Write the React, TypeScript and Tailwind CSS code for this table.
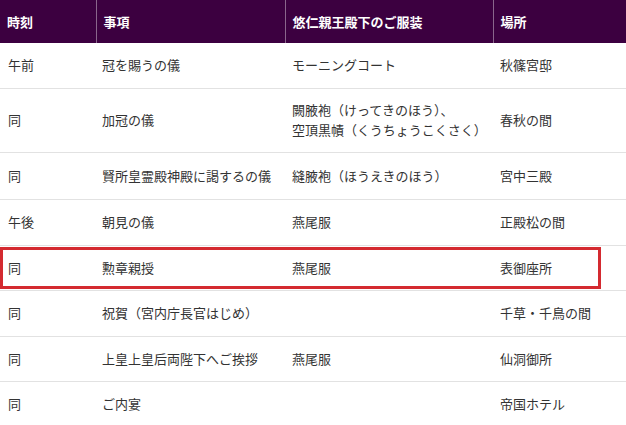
const rows: { t: string; e: string; d: string[]; p: string; h: string }[] = [
  { t: "午前", e: "冠を賜うの儀", d: ["モーニングコート"], p: "秋篠宮邸", h: "h-[45px]" },
  { t: "同", e: "加冠の儀", d: ["闕腋袍（けってきのほう）、", "空頂黒幘（くうちょうこくさく）"], p: "春秋の間", h: "h-[64px]" },
  { t: "同", e: "賢所皇霊殿神殿に謁するの儀", d: ["縫腋袍（ほうえきのほう）"], p: "宮中三殿", h: "h-[47px]" },
  { t: "午後", e: "朝見の儀", d: ["燕尾服"], p: "正殿松の間", h: "h-[46px]" },
  { t: "同", e: "勲章親授", d: ["燕尾服"], p: "表御座所", h: "h-[45px]" },
  { t: "同", e: "祝賀（宮内庁長官はじめ）", d: [], p: "千草・千鳥の間", h: "h-[46px]" },
  { t: "同", e: "上皇上皇后両陛下へご挨拶", d: ["燕尾服"], p: "仙洞御所", h: "h-[45px]" },
  { t: "同", e: "ご内宴", d: [], p: "帝国ホテル", h: "h-[46px]" },
];

export default function App() {
  return (
    <div
      className="w-[626px] h-[425px] overflow-hidden bg-white relative"
      style={{ fontFamily: '"Noto Sans CJK JP", "Noto Sans", sans-serif' }}
    >
      <table className="w-[626px] table-fixed border-collapse text-[13px] leading-[20px] text-[#333]">
        <colgroup>
          <col className="w-[96px]" />
          <col className="w-[189px]" />
          <col className="w-[208px]" />
          <col className="w-[133px]" />
        </colgroup>
        <thead>
          <tr className="bg-[#3c0040] text-white">
            {["時刻", "事項", "悠仁親王殿下のご服装", "場所"].map((h, i) => (
              <th
                key={i}
                className={`h-[43px] px-[7px] text-left font-bold ${i < 3 ? "border-r border-[#8a658c]" : ""}`}
              >
                {h}
              </th>
            ))}
          </tr>
        </thead>
        <tbody>
          {rows.map((r, i) => (
            <tr key={i} className={`border-b border-[#e2e2e2] ${r.h}`}>
              <td className="p-0 pl-[8px] align-middle">{r.t}</td>
              <td className="p-0 px-[6px] align-middle whitespace-nowrap">{r.e}</td>
              <td className="p-0 px-[7px] align-middle whitespace-nowrap">
                {r.d.map((l, j) => (
                  <div key={j}>{l}</div>
                ))}
              </td>
              <td className="p-0 px-[7px] align-middle">{r.p}</td>
            </tr>
          ))}
        </tbody>
      </table>
      {/* highlight annotation */}
      <div className="absolute left-0 top-[247px] w-[601px] h-[42px] border-[3px] border-[#d42a30] pointer-events-none" />
    </div>
  );
}
